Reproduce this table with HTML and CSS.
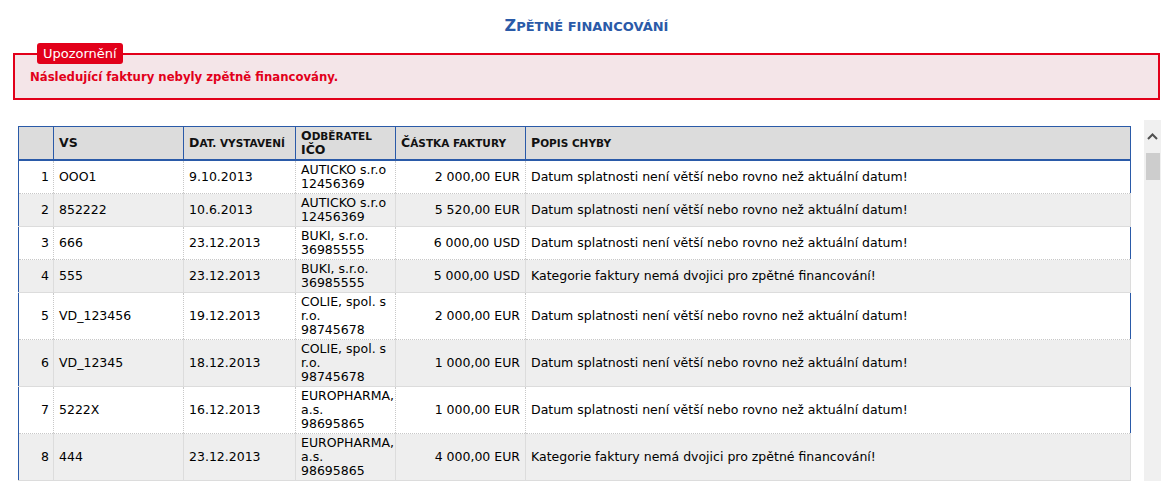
FILE: index.html
```html
<!DOCTYPE html>
<html lang="cs">
<head>
<meta charset="utf-8">
<title>Zpětné financování</title>
<link rel="stylesheet" href="styles.css">
</head>
<body>
<h1 class="title"><span class="big">Z</span>pětné financování</h1>
<fieldset class="alert">
  <legend class="alert-legend">Upozornění</legend>
  <p class="alert-msg">Následující faktury nebyly zpětně financovány.</p>
</fieldset>
<div class="grid-area">
  <div class="grid-scroll">
    <table class="grid">
      <colgroup>
        <col class="c-num"><col class="c-vs"><col class="c-dat"><col class="c-odb"><col class="c-cast"><col class="c-popis">
      </colgroup>
      <thead>
        <tr>
          <th></th>
          <th><span class="big">VS</span></th>
          <th><span class="big">D</span>at. vystavení</th>
          <th><span class="big">O</span>dběratel<br><span class="big">IČO</span></th>
          <th><span class="big">Č</span>ástka faktury</th>
          <th><span class="big">P</span>opis chyby</th>
        </tr>
      </thead>
      <tbody>
        <tr><td class="num">1</td><td>OOO1</td><td>9.10.2013</td><td>AUTICKO s.r.o<br>12456369</td><td class="amt">2 000,00 EUR</td><td>Datum splatnosti není větší nebo rovno než aktuální datum!</td></tr>
        <tr class="alt"><td class="num">2</td><td>852222</td><td>10.6.2013</td><td>AUTICKO s.r.o<br>12456369</td><td class="amt">5 520,00 EUR</td><td>Datum splatnosti není větší nebo rovno než aktuální datum!</td></tr>
        <tr><td class="num">3</td><td>666</td><td>23.12.2013</td><td>BUKI, s.r.o.<br>36985555</td><td class="amt">6 000,00 USD</td><td>Datum splatnosti není větší nebo rovno než aktuální datum!</td></tr>
        <tr class="alt"><td class="num">4</td><td>555</td><td>23.12.2013</td><td>BUKI, s.r.o.<br>36985555</td><td class="amt">5 000,00 USD</td><td>Kategorie faktury nemá dvojici pro zpětné financování!</td></tr>
        <tr><td class="num">5</td><td>VD_123456</td><td>19.12.2013</td><td>COLIE, spol. s<br>r.o.<br>98745678</td><td class="amt">2 000,00 EUR</td><td>Datum splatnosti není větší nebo rovno než aktuální datum!</td></tr>
        <tr class="alt"><td class="num">6</td><td>VD_12345</td><td>18.12.2013</td><td>COLIE, spol. s<br>r.o.<br>98745678</td><td class="amt">1 000,00 EUR</td><td>Datum splatnosti není větší nebo rovno než aktuální datum!</td></tr>
        <tr><td class="num">7</td><td>5222X</td><td>16.12.2013</td><td>EUROPHARMA,<br>a.s.<br>98695865</td><td class="amt">1 000,00 EUR</td><td>Datum splatnosti není větší nebo rovno než aktuální datum!</td></tr>
        <tr class="alt"><td class="num">8</td><td>444</td><td>23.12.2013</td><td>EUROPHARMA,<br>a.s.<br>98695865</td><td class="amt">4 000,00 EUR</td><td>Kategorie faktury nemá dvojici pro zpětné financování!</td></tr>
        <tr class="empty"><td></td><td></td><td></td><td></td><td></td><td></td></tr>
      </tbody>
    </table>
  </div>
  <div class="scrollbar">
    <div class="sb-btn">
      <svg width="11" height="7" viewBox="0 0 11 7"><path d="M1 6 L5.5 1.5 L10 6" fill="none" stroke="#505050" stroke-width="2"/></svg>
    </div>
    <div class="sb-thumb"></div>
  </div>
</div>
</body>
</html>
```

FILE: styles.css
```css
html, body {
  margin: 0;
  padding: 0;
  background: #fff;
  height: 481px;
  overflow: hidden;
}
body {
  font-family: "DejaVu Sans", Verdana, sans-serif;
  font-size: 12.5px;
  color: #000;
}
.title {
  margin: 0;
  padding: 16px 0 0 12px;
  height: 27px;
  text-align: center;
  font-size: 13px;
  line-height: 20px;
  font-weight: bold;
  text-transform: uppercase;
  color: #2a5aa8;
}
.title .big {
  font-size: 16px;
}
.alert {
  margin: 0 1px 0 13px;
  padding: 0 15px 0 15px;
  border: 2px solid #e2001a;
  background: #f4e5e8;
  min-width: 0;
}
.alert-legend {
  margin-left: 7px;
  padding: 0 6px;
  height: 21px;
  line-height: 21px;
  background: #e2001a;
  color: #fff;
  border-radius: 3px;
  font-size: 13px;
}
.alert-msg {
  margin: 0;
  padding: 5px 0 13px;
  line-height: 16px;
  color: #e2001a;
  font-weight: bold;
  font-size: 11.7px;
}
.grid-area {
  margin-top: 20px;
  height: 361px;
  display: flex;
  overflow: hidden;
}
.grid-scroll {
  padding: 6px 0 0 18px;
  width: 1113px;
}
.grid {
  width: 1113px;
  border-collapse: collapse;
  table-layout: fixed;
  border: 1px solid #2a5aa8;
}
.c-num { width: 35px; }
.c-vs { width: 130px; }
.c-dat { width: 112px; }
.c-odb { width: 100px; }
.c-cast { width: 130px; }
.grid th {
  background: #dcdcdc;
  text-align: left;
  font-weight: bold;
  text-transform: uppercase;
  font-size: 10.5px;
  line-height: 13px;
  padding: 2px 5px 2px 5px;
  height: 27px;
  border-right: 1px solid #2a5aa8;
  border-bottom: 2px solid #2a5aa8;
  color: #111;
  vertical-align: middle;
  white-space: nowrap;
}
.grid th .big {
  font-size: 12.5px;
}
.grid td {
  padding: 2px 5px;
  line-height: 14px;
  height: 28px;
  vertical-align: middle;
  border-right: 1px dotted #c8c8c8;
  border-bottom: 1px dotted #c8c8c8;
  white-space: nowrap;
  overflow: hidden;
}
.grid tr.alt td {
  background: #eeeeee;
  border-right: 1px solid #dcdcdc;
  border-bottom: 1px solid #dcdcdc;
}
.grid td.num { text-align: right; padding-right: 4px; }
.grid td.amt { text-align: right; }
.scrollbar {
  margin-left: 13px;
  width: 17px;
  background: #f0f0f0;
  display: flex;
  flex-direction: column;
  align-items: center;
}
.sb-btn {
  height: 33px;
  width: 17px;
  display: flex;
  align-items: center;
  justify-content: center;
}
.sb-thumb {
  width: 14px;
  height: 27px;
  background: #cdcdcd;
}
```
